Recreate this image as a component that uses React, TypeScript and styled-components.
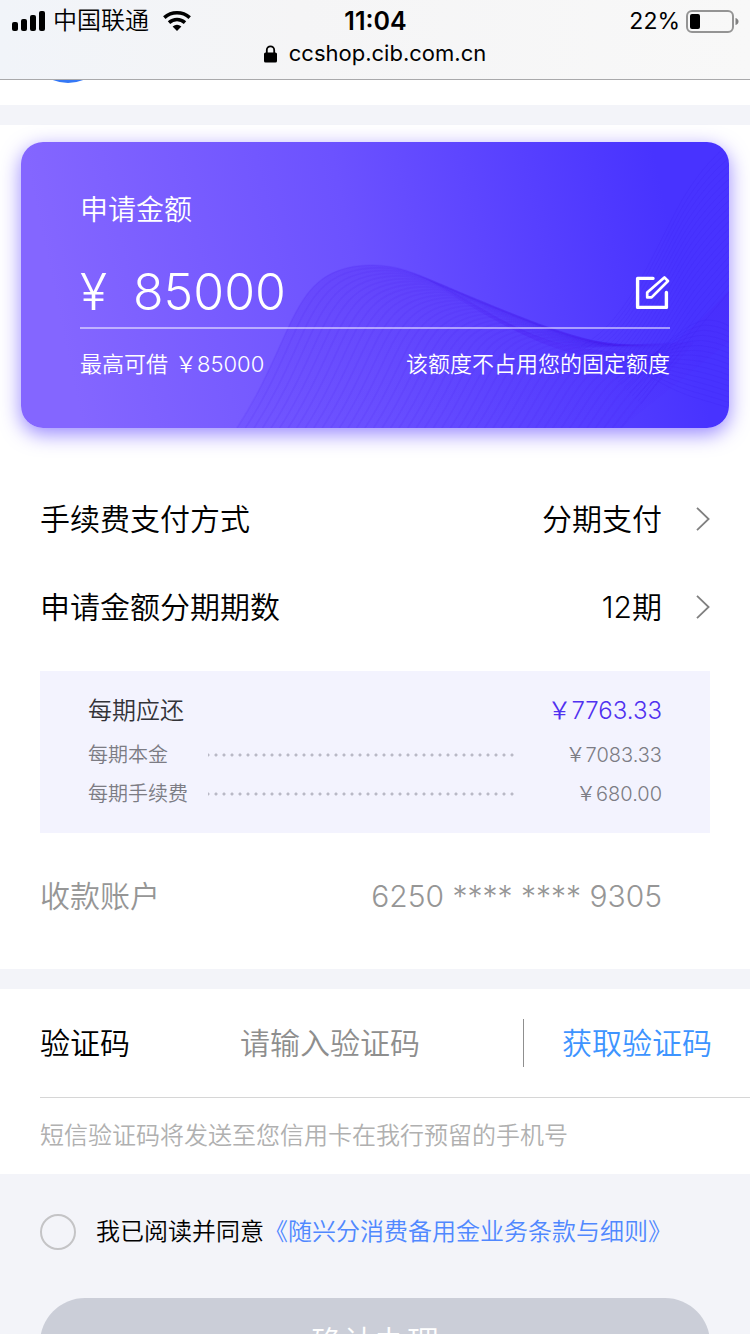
import React from "react";
import styled, { createGlobalStyle } from "styled-components";

const GlobalStyle = createGlobalStyle`
  * { box-sizing: border-box; }
  body {
    margin: 0;
    background: #f3f4f9;
    color: #000;
    font-family: Inter, "Noto Sans CJK SC", sans-serif;
    font-weight: 350;
    line-height: 1.4;
  }
  button, input { font: inherit; color: inherit; border: 0; background: none; padding: 0; }
`;

const Screen = styled.div`
  display: flex;
  flex-direction: column;
  height: 100vh;
  overflow: hidden;
`;

const Header = styled.header`
  flex: none;
  border-bottom: 1px solid #a9a9ab;
  background: linear-gradient(90deg, #f1f4f9 0%, #f5f5f6 40%, #f8f8f8 100%);
`;

const StatusBar = styled.div`
  display: grid;
  grid-template-columns: 1fr auto 1fr;
  align-items: center;
  height: 40px;
  padding: 2px 11px 0 12px;
  font-size: 24px;
`;

const Carrier = styled.div`
  display: flex;
  align-items: center;
  gap: 8px;
`;

const Clock = styled.time`
  font-size: 25px;
  font-weight: 600;
`;

const Battery = styled.div`
  display: flex;
  align-items: center;
  justify-content: flex-end;
  gap: 6px;
  font-size: 23px;
  font-weight: 400;
`;

const AddressBar = styled.div`
  display: flex;
  align-items: center;
  justify-content: center;
  gap: 12px;
  height: 39px;
  padding-bottom: 12px;
  font-size: 22px;
  font-weight: 400;
`;

const Content = styled.main`
  flex: 1;
  min-height: 0;
  overflow-y: auto;
  scrollbar-width: none;
`;

const Panel = styled.section`
  background: #fff;
  margin-bottom: 20px;
`;

const Peek = styled(Panel)`
  height: 25px;
  padding-left: 48px;
  svg { display: block; }
`;

const LoanPanel = styled(Panel)`
  padding: 17px 0 29px;
`;

const AmountCard = styled.div`
  position: relative;
  margin: 0 21px 47px;
  padding: 48px 59px 49px;
  border-radius: 22px;
  color: #fff;
  background: linear-gradient(78deg, #8466ff 8%, #6c52ff 48%, #4833ff 90%);
  box-shadow: 0 6px 20px rgba(84, 56, 255, 0.6);
`;

const Waves = styled.svg`
  position: absolute;
  inset: 0;
  width: 100%;
  height: 100%;
  border-radius: 22px;
`;

const CardBody = styled.div`
  position: relative;
`;

const CardTitle = styled.h1`
  margin: 0;
  font-size: 28px;
  font-weight: 350;
  line-height: 40px;
`;

const AmountRow = styled.div`
  display: flex;
  align-items: center;
  justify-content: space-between;
  height: 99px;
  padding-top: 26px;
  border-bottom: 2px solid rgba(255, 255, 255, 0.5);
`;

const Amount = styled.div`
  display: flex;
  gap: 26px;
  font-size: 50px;
  font-weight: 300;
`;

const IconButton = styled.button`
  display: flex;
  cursor: pointer;
`;

const CardNote = styled.div`
  display: flex;
  justify-content: space-between;
  margin-top: 20px;
  font-size: 22px;
  line-height: 30px;
`;

const MaxAmount = styled.span`
  display: flex;
  gap: 7px;
`;

const Row = styled.div<{ $muted?: boolean }>`
  display: flex;
  align-items: center;
  justify-content: space-between;
  height: 88px;
  padding: 0 ${(p) => (p.$muted ? 88 : 40)}px 0 40px;
  font-size: 30px;
  color: ${(p) => (p.$muted ? "#969696" : "#000")};
`;

const Picker = styled.button`
  display: flex;
  align-items: center;
  gap: 34px;
  cursor: pointer;
`;

const Breakdown = styled.dl`
  margin: 20px 40px 19px;
  padding: 16px 48px 20px;
  background: #f3f3fe;
`;

const BreakdownRow = styled.div<{ $total?: boolean }>`
  display: flex;
  align-items: center;
  justify-content: space-between;
  height: ${(p) => (p.$total ? 48 : 39)}px;
  font-size: ${(p) => (p.$total ? 24 : 20)}px;
  color: ${(p) => (p.$total ? "#333338" : "#7c7c84")};
  dt { flex: 0 0 120px; }
  dd {
    flex: 0 0 146px;
    margin: 0;
    text-align: right;
    color: ${(p) => (p.$total ? "#5030f0" : "inherit")};
  }
`;

const Dots = styled.span`
  flex: 1;
  height: 8px;
  background: radial-gradient(circle, #b9b9c6 1px, transparent 2px) -4px 0 / 8px 8px;
`;

const CodeRow = styled.div`
  display: flex;
  align-items: center;
  height: 109px;
  margin-left: 40px;
  padding-right: 38px;
  border-bottom: 1px solid #d6d6d6;
  font-size: 30px;
  label { flex: 0 0 200px; }
`;

const CodeInput = styled.input`
  flex: 1;
  min-width: 0;
  height: 60px;
  outline: 0;
  &::placeholder { color: #8e8e8e; opacity: 1; }
`;

const SendCode = styled.button`
  height: 48px;
  padding-left: 38px;
  border-left: 1px solid #8f8f8f;
  color: #3d94ff;
  cursor: pointer;
`;

const CodePanel = styled(Panel)`
  margin: 0;
`;

const Hint = styled.p`
  margin: 0;
  padding: 0 40px;
  font-size: 24px;
  line-height: 76px;
  color: #b0b0b0;
`;

const Agreement = styled.div`
  display: flex;
  align-items: center;
  height: 36px;
  margin: 40px 40px 48px;
  font-size: 24px;
  label { margin-left: 20px; }
  a { color: #5088ff; text-decoration: none; }
`;

const RoundCheck = styled.input`
  appearance: none;
  flex: none;
  width: 36px;
  height: 36px;
  margin: 0;
  border: 2px solid #c4c4c6;
  border-radius: 50%;
  &:checked { background: #5088ff; }
`;

const Submit = styled.button`
  display: block;
  width: calc(100% - 80px);
  height: 90px;
  margin: 0 40px 40px;
  border-radius: 45px;
  background: #cbced8;
  color: #fff;
  font-size: 32px;
`;

const Chevron = () => (
  <svg width="14" height="24" viewBox="0 0 14 24" fill="none" stroke="#808080" strokeWidth="1.8" aria-hidden="true">
    <path d="M1 .8 12.6 12 1 23.2" />
  </svg>
);

type Curve = number[];
const blend = (a: Curve, b: Curve, t: number) => a.map((v, i) => (v + (b[i] - v) * t).toFixed(1));
const toPath = (c: (string | number)[]) =>
  `M${c[0]} ${c[1]}C${c.slice(2, 8).join(" ")} ${c.slice(8, 14).join(" ")}`;
const family = (a: Curve, b: Curve, n: number) =>
  Array.from({ length: n }, (_, i) => toPath(blend(a, b, i / (n - 1))));

// Each curve is a start point followed by two cubic segments in card units.
const crest: Curve = [216, 286, 278, 190, 268, 124, 351, 123, 420, 123, 460, 188, 560, 206];
const trough: Curve = [600, 286, 612, 270, 622, 258, 632, 246, 642, 234, 655, 222, 672, 200];
const rightTop: Curve = [560, 204, 610, 180, 640, 90, 666, 50, 680, 28, 695, 12, 708, 2];
const rightLow: Curve = [620, 262, 640, 236, 660, 208, 676, 188, 688, 174, 698, 162, 708, 150];
const tailTop: Curve = [620, 226, 650, 194, 670, 180, 685, 178, 693, 178, 701, 180, 708, 184];
const tailLow: Curve = [600, 216, 630, 236, 650, 248, 672, 255, 685, 259, 696, 262, 708, 266];

const CardWaves = () => (
  <Waves viewBox="0 0 708 286" preserveAspectRatio="none" fill="none" aria-hidden="true">
    <defs>
      <linearGradient id="veil" x1="0" y1="0" x2="0" y2="1">
        <stop offset="0" stopColor="#4a1cf0" stopOpacity=".24" />
        <stop offset="1" stopColor="#4a2cff" stopOpacity=".1" />
      </linearGradient>
      <linearGradient id="fold" x1="400" x2="640" y1="0" y2="0" gradientUnits="userSpaceOnUse">
        <stop offset="0" stopColor="#4a1cf0" stopOpacity="0" />
        <stop offset=".4" stopColor="#4a1cf0" stopOpacity=".35" />
        <stop offset="1" stopColor="#4a1cf0" stopOpacity="0" />
      </linearGradient>
    </defs>
    <path
      d="M216 286C278 190 268 124 351 123C420 123 460 188 560 206Q610 214 644 208Q680 180 708 148V200L600 286Z"
      fill="url(#veil)"
    />
    <path d="M400 134C450 154 490 194 560 206Q600 212 640 208Q590 224 540 208T400 134Z" fill="url(#fold)" />
    <g stroke="#4a1eee" strokeOpacity=".12" strokeWidth="1.6">
      {family(crest, trough, 46).map((d) => <path key={d} d={d} />)}
    </g>
    <g stroke="#3a1ce8" strokeOpacity=".12">
      {family(rightTop, rightLow, 22).map((d) => <path key={d} d={d} />)}
      {family(tailTop, tailLow, 16).map((d) => <path key={d} d={d} />)}
    </g>
  </Waves>
);

export default function App() {
  return (
    <Screen>
      <GlobalStyle />
      <Header>
        <StatusBar>
          <Carrier>
            <svg width="33" height="20" viewBox="0 0 33 20" aria-hidden="true">
              <rect y="11" width="6" height="9" rx="2" />
              <rect x="9" y="8" width="6" height="12" rx="2" />
              <rect x="18" y="4" width="6" height="16" rx="2" />
              <rect x="27" width="6" height="20" rx="2" />
            </svg>
            <span>中国联通</span>
            <svg width="40" height="20" viewBox="-6 0 40 20" fill="none" stroke="#000" strokeWidth="3.6" aria-hidden="true">
              <path d="M1.3 6.6C8.5 .2 19.5 .2 26.7 6.6" />
              <path d="M6 11.6C10.6 7.5 17.4 7.5 22 11.6" />
              <path d="M9.6 15.6Q14 12 18.4 15.6L14 20Z" fill="#000" stroke="none" />
            </svg>
          </Carrier>
          <Clock>11:04</Clock>
          <Battery>
            <span>22%</span>
            <svg width="53" height="23" viewBox="0 0 53 23" aria-hidden="true">
              <rect x="1" y="1" width="46" height="21" rx="5" fill="none" stroke="#949494" strokeWidth="2" />
              <rect x="4" y="4" width="10" height="15" rx="2" />
              <path d="M49.5 8Q52.5 9 52.5 11.5T49.5 15Z" fill="#808080" />
            </svg>
          </Battery>
        </StatusBar>
        <AddressBar>
          <svg width="13" height="18" viewBox="0 0 13 18" aria-hidden="true">
            <rect y="7.5" width="13" height="10" rx="1.6" />
            <path d="M2.8 8V5a3.7 3.7 0 0 1 7.4 0V8" fill="none" stroke="#000" strokeWidth="1.8" />
          </svg>
          <span>ccshop.cib.com.cn</span>
        </AddressBar>
      </Header>

      <Content>
        <Peek>
          <svg width="40" height="3" viewBox="0 0 40 3" aria-hidden="true">
            <circle cx="20" cy="-37" r="40" fill="#3478f6" />
          </svg>
        </Peek>

        <LoanPanel>
          <AmountCard>
            <CardWaves />
            <CardBody>
              <CardTitle>申请金额</CardTitle>
              <AmountRow>
                <Amount>
                  <span>¥</span>
                  <span>85000</span>
                </Amount>
                <IconButton aria-label="修改金额">
                  <svg width="36" height="37" viewBox="0 0 36 37" fill="none" stroke="#fff" aria-hidden="true">
                    <path d="M19 5.4H3.6V34.4H32.4V19.5" strokeWidth="3.4" strokeLinecap="round" strokeLinejoin="round" />
                    <path d="M13.2 19.6 30.4 4.4 34 8 17.6 24.4H13.2Z" strokeWidth="2.7" strokeLinejoin="round" />
                  </svg>
                </IconButton>
              </AmountRow>
              <CardNote>
                <MaxAmount>
                  <span>最高可借</span>
                  <span>￥85000</span>
                </MaxAmount>
                <span>该额度不占用您的固定额度</span>
              </CardNote>
            </CardBody>
          </AmountCard>

          <Row>
            <span>手续费支付方式</span>
            <Picker>分期支付<Chevron /></Picker>
          </Row>
          <Row>
            <span>申请金额分期期数</span>
            <Picker>12期<Chevron /></Picker>
          </Row>

          <Breakdown>
            <BreakdownRow $total>
              <dt>每期应还</dt>
              <dd>￥7763.33</dd>
            </BreakdownRow>
            <BreakdownRow>
              <dt>每期本金</dt>
              <Dots />
              <dd>￥7083.33</dd>
            </BreakdownRow>
            <BreakdownRow>
              <dt>每期手续费</dt>
              <Dots />
              <dd>￥680.00</dd>
            </BreakdownRow>
          </Breakdown>

          <Row $muted>
            <span>收款账户</span>
            <span>6250 **** **** 9305</span>
          </Row>
        </LoanPanel>

        <CodePanel>
          <CodeRow>
            <label htmlFor="code">验证码</label>
            <CodeInput id="code" inputMode="numeric" placeholder="请输入验证码" />
            <SendCode>获取验证码</SendCode>
          </CodeRow>
          <Hint>短信验证码将发送至您信用卡在我行预留的手机号</Hint>
        </CodePanel>

        <Agreement>
          <RoundCheck type="checkbox" id="agree" />
          <label htmlFor="agree">我已阅读并同意</label>
          <a href="#terms">《随兴分消费备用金业务条款与细则》</a>
        </Agreement>
        <Submit>确认办理</Submit>
      </Content>
    </Screen>
  );
}
